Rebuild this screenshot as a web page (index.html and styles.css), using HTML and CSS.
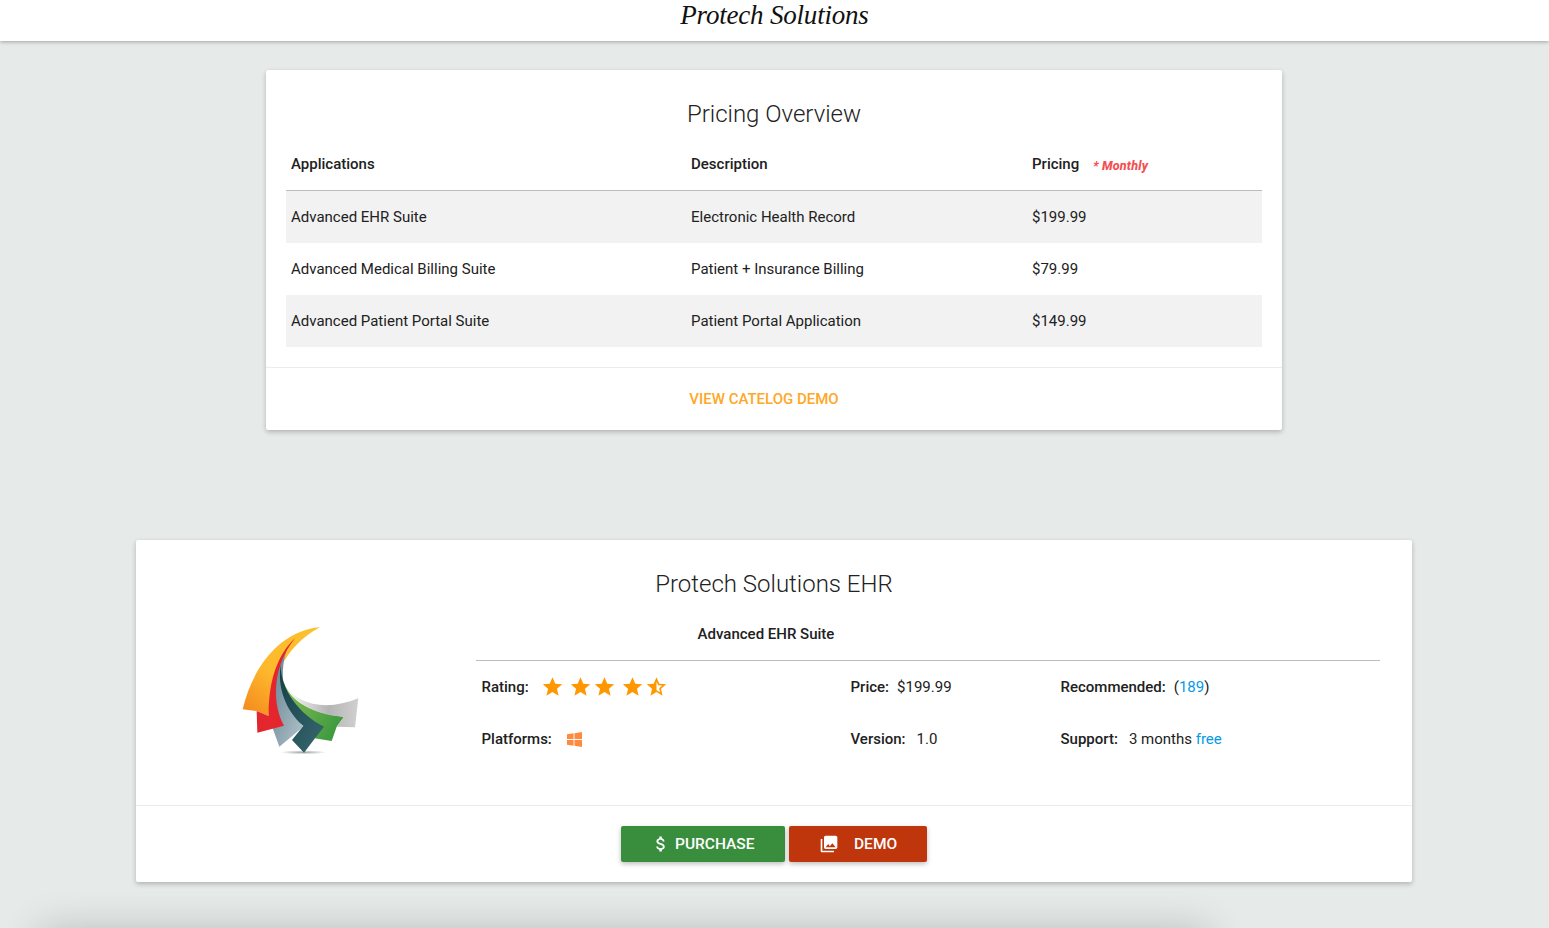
FILE: index.html
```html
<!DOCTYPE html>
<html lang="en">
<head>
<meta charset="utf-8">
<title>Protech Solutions</title>
<link rel="stylesheet" href="styles.css">
</head>
<body>
<header class="topbar"><span class="brand">Protech Solutions</span></header>
<main class="page">
  <section class="card pricing">
    <h2 class="card-title pricing-title">Pricing Overview</h2>
    <div class="table-wrap">
      <table class="price-table">
        <thead>
          <tr><th class="col-a">Applications</th><th class="col-b">Description</th><th class="col-c">Pricing <em class="monthly">* Monthly</em></th></tr>
        </thead>
        <tbody>
          <tr><td>Advanced EHR Suite</td><td>Electronic Health Record</td><td>$199.99</td></tr>
          <tr><td>Advanced Medical Billing Suite</td><td>Patient + Insurance Billing</td><td>$79.99</td></tr>
          <tr><td>Advanced Patient Portal Suite</td><td>Patient Portal Application</td><td>$149.99</td></tr>
        </tbody>
      </table>
    </div>
    <div class="card-action link-action"><a class="demo-link" href="#">VIEW CATELOG DEMO</a></div>
  </section>

  <section class="card product">
    <h2 class="card-title product-title">Protech Solutions EHR</h2>
    <div class="product-body">
      <div class="logo-col">
        <svg class="logo" viewBox="0 0 480 480" width="160" height="160" aria-label="Protech logo">
          <defs>
            <linearGradient id="gOrange" x1="0.8" y1="0" x2="0.1" y2="1"><stop offset="0" stop-color="#fbc02d"/><stop offset="0.55" stop-color="#fdb92c"/><stop offset="1" stop-color="#f58a1f"/></linearGradient>
            <linearGradient id="gRed" x1="0.8" y1="0" x2="0.2" y2="1"><stop offset="0" stop-color="#e8232c"/><stop offset="1" stop-color="#e3262e"/></linearGradient>
            <linearGradient id="gBlue" x1="0" y1="0" x2="1" y2="1"><stop offset="0" stop-color="#5f7f8c"/><stop offset="1" stop-color="#b3c4cc"/></linearGradient>
            <linearGradient id="gTeal" x1="0" y1="0" x2="1" y2="1"><stop offset="0" stop-color="#123f48"/><stop offset="1" stop-color="#3a6870"/></linearGradient>
            <linearGradient id="gGreen" x1="0" y1="0" x2="1" y2="0.6"><stop offset="0" stop-color="#8cc152"/><stop offset="1" stop-color="#3f9a40"/></linearGradient>
            <linearGradient id="gSilver" x1="0" y1="0" x2="1" y2="0"><stop offset="0" stop-color="#ffffff"/><stop offset="0.6" stop-color="#b5b5b5"/><stop offset="1" stop-color="#d0d0d0"/></linearGradient>
            <radialGradient id="gShadow"><stop offset="0" stop-color="#9aa5a8"/><stop offset="1" stop-color="#ffffff"/></radialGradient>
          </defs>
          <ellipse cx="250" cy="427" rx="70" ry="6" fill="url(#gShadow)"/>
          <path d="M300 52C190 60 100 160 68 298L110 303L146 318C150 220 190 110 300 52Z" fill="url(#gOrange)"/>
          <path d="M205 105C170 160 150 260 157 352L178 410L250 350C205 300 165 210 205 105Z" fill="url(#gBlue)"/>
          <path d="M225 85C165 140 145 230 146 318L110 303L112 368L192 347C160 290 150 180 225 85Z" fill="url(#gRed)"/>
          <path d="M190 210C205 270 270 310 372 320L350 350L335 393L283 385L270 340C225 310 195 270 190 210Z" fill="url(#gGreen)"/>
          <path d="M182 165C182 240 240 315 312 350L285 385L252 428L216 390L250 348C195 300 172 230 182 165Z" fill="url(#gTeal)"/>
          <path d="M190 215C225 285 320 305 415 265L405 352L350 350L372 320C290 315 225 285 190 215Z" fill="url(#gSilver)"/>
        </svg>
      </div>
      <div class="info-col">
        <h3 class="suite">Advanced EHR Suite</h3>
        <div class="spec-grid">
          <div class="spec"><b>Rating:</b>
            <span class="stars">
              <svg class="star" viewBox="0 0 24 24"><path d="M12 1.500l3.200 7.300 7.900.7-6 5.200 1.800 7.800L12 18.400l-6.900 4.100 1.800-7.800-6-5.200 7.900-.7z"/></svg>
              <svg class="star" viewBox="0 0 24 24"><path d="M12 1.500l3.200 7.300 7.900.7-6 5.200 1.800 7.800L12 18.400l-6.900 4.100 1.800-7.800-6-5.200 7.900-.7z"/></svg>
              <svg class="star" viewBox="0 0 24 24"><path d="M12 1.500l3.200 7.300 7.900.7-6 5.200 1.800 7.800L12 18.400l-6.900 4.100 1.800-7.800-6-5.200 7.900-.7z"/></svg>
              <svg class="star" viewBox="0 0 24 24"><path d="M12 1.500l3.200 7.300 7.900.7-6 5.200 1.800 7.800L12 18.400l-6.900 4.100 1.800-7.800-6-5.200 7.900-.7z"/></svg>
              <svg class="star" viewBox="0 0 24 24"><path fill-rule="evenodd" d="M12 1.500l3.200 7.300 7.900.7-6 5.200 1.800 7.800-6.900-4.100-6.900 4.100 1.800-7.800-6-5.200 7.900-.7zM12 6.600v9.700l4.100 2.400-1.100-4.700 3.600-3.100-4.700-.4z"/></svg>
            </span>
          </div>
          <div class="spec"><b>Price:</b><span>$199.99</span></div>
          <div class="spec"><b>Recommended:</b><span>(<a class="blue" href="#">189</a>)</span></div>
          <div class="spec"><b>Platforms:</b>
            <svg class="win" viewBox="0 0 16 16"><path d="M0 2.400L7 1.400V7.500H0zM8 1.300L16 0V7.500H8zM0 8.500H7V14.600L0 13.600zM8 8.500H16V16L8 14.700z"/></svg>
          </div>
          <div class="spec"><b>Version:</b><span class="pad">1.0</span></div>
          <div class="spec"><b>Support:</b><span class="pad">3 months <a class="blue" href="#">free</a></span></div>
        </div>
      </div>
    </div>
    <div class="card-action button-action">
      <a class="btn btn-green" href="#">
        <svg class="btn-icon" viewBox="0 0 24 24"><path d="M11.800 10.900c-2.270-.59-3-1.200-3-2.150 0-1.090 1.010-1.850 2.700-1.850 1.780 0 2.440.85 2.500 2.100h2.210c-.07-1.720-1.120-3.300-3.210-3.810V3h-3v2.160c-1.940.42-3.500 1.680-3.500 3.610 0 2.310 1.910 3.460 4.700 4.130 2.500.6 3 1.480 3 2.410 0 .69-.49 1.790-2.700 1.790-2.060 0-2.870-.92-2.980-2.100h-2.200c.12 2.190 1.760 3.420 3.680 3.830V21h3v-2.150c1.950-.37 3.500-1.500 3.500-3.550 0-2.840-2.430-3.810-4.700-4.400z"/></svg>
        PURCHASE
      </a>
      <a class="btn btn-red" href="#">
        <svg class="btn-icon" viewBox="0 0 24 24"><path d="M22 16V4c0-1.100-.9-2-2-2H8c-1.100 0-2 .9-2 2v12c0 1.100.9 2 2 2h12c1.100 0 2-.9 2-2zm-11-4l2.030 2.710L16 11l4 5H8l3-4zM2 6v14c0 1.100.9 2 2 2h14v-2H4V6H2z"/></svg>
        DEMO
      </a>
    </div>
  </section>

  <section class="ghost-card"></section>
</main>
</body>
</html>
```
FILE: styles.css
```css
* { box-sizing: border-box; }
html, body { margin: 0; height: 928px; overflow: hidden; }
body {
  background: #e6eae9;
  color: #212121;
  font-family: Roboto, "Liberation Sans", sans-serif;
  font-size: 15px;
  line-height: 20px;
}
a { text-decoration: none; }
.topbar {
  height: 41px;
  background: #fff;
  box-shadow: 0 1px 4px rgba(0, 0, 0, .3);
  display: flex;
  justify-content: center;
  overflow: hidden;
  position: relative;
  z-index: 2;
}
.brand {
  font-family: "Liberation Serif", serif;
  font-style: italic;
  font-size: 27px;
  line-height: 30px;
  letter-spacing: -.2px;
  color: #111;
  white-space: nowrap;
}
.page { display: flex; flex-direction: column; align-items: center; padding: 29px 1px 0 0; }
.card {
  background: #fff;
  border-radius: 2px;
  box-shadow: 0 2px 5px rgba(0, 0, 0, .24);
}
.card-title { margin: 0; font-weight: 300; font-size: 24px; line-height: 32px; text-align: center; color: #222; }
.pricing { width: 1016px; height: 360px; display: flex; flex-direction: column; flex: none; }
.pricing-title { box-sizing: content-box; padding-top: 28px; height: 32px; }
.table-wrap { padding: 0 20px; margin-top: 10px; }
.price-table { width: 976px; border-collapse: separate; border-spacing: 0; table-layout: fixed; }
.price-table th {
  height: 51px;
  padding: 0 5px 3px;
  text-align: left;
  font-weight: 500;
  line-height: 20px;
  border-bottom: 1px solid #bdbdbd;
}
.col-a { width: 400px; }
.col-b { width: 341px; }
.col-c { vertical-align: middle; }
.price-table td { height: 52px; padding: 0 5px; }
.price-table tbody tr:nth-child(odd) { background: #f2f2f2; }
.monthly { margin-left: 10px; color: #f44e53; font-size: 12.500px; font-weight: 800; letter-spacing: .2px; line-height: 1; position: relative; top: 1px; }
.card-action { border-top: 1px solid #ececec; }
.link-action { margin-top: 20px; height: 63px; display: flex; justify-content: center; align-items: center; padding: 0 20px 0 0; }
.demo-link { color: #ffa726; font-weight: 500; }
.product { width: 1276px; height: 342px; margin-top: 110px; display: flex; flex-direction: column; flex: none; }
.product-title { padding-top: 28px; box-sizing: content-box; height: 32px; }
.product-body { display: flex; flex: 1; }
.logo-col { width: 340px; }
.logo { display: block; margin: 10px 0 0 84px; }
.info-col { width: 904px; }
.suite { margin: 0; width: 580px; height: 60px; padding-top: 24px; text-align: center; font-size: 15px; font-weight: 500; line-height: 20px; }
.spec-grid {
  display: grid;
  grid-template-columns: 369px 210px 1fr;
  grid-auto-rows: 52px;
  border-top: 1px solid #bdbdbd;
  padding: 0 5px 0 5.500px;
}
.spec { display: flex; align-items: center; gap: 8px; }
.spec b { font-weight: 500; }
.pad { margin-left: 3px; }
.blue { color: #039be5; }
.stars { display: flex; margin: -2px 0 0 5px; fill: #ff9800; }
.star { width: 21px; height: 21px; margin-right: 3px; display: block; }
.star:nth-child(odd) { margin-right: 7px; }
.win { width: 15px; height: 15px; margin-left: 7.500px; fill: #ff8a3d; }
.button-action { height: 77px; display: flex; justify-content: center; gap: 4px; padding-top: 20px; }
.btn {
  height: 36px;
  border-radius: 2px;
  color: #fff;
  font-weight: 500;
  font-size: 15.500px;
  display: flex;
  align-items: center;
  box-shadow: 0 2px 5px rgba(0, 0, 0, .26);
}
.btn-green { width: 164px; background: #388e3c; padding-left: 30px; gap: 4px; }
.btn-red { width: 138px; background: #bf360c; padding-left: 30px; gap: 15px; }
.btn-icon { width: 20px; height: 20px; fill: #fff; }
.ghost-card {
  width: 1150px;
  height: 100px;
  margin: 58px 0 0 -300px;
  flex: none;
  box-shadow: 0 0 40px 10px rgba(0, 0, 0, .2);
}
```
